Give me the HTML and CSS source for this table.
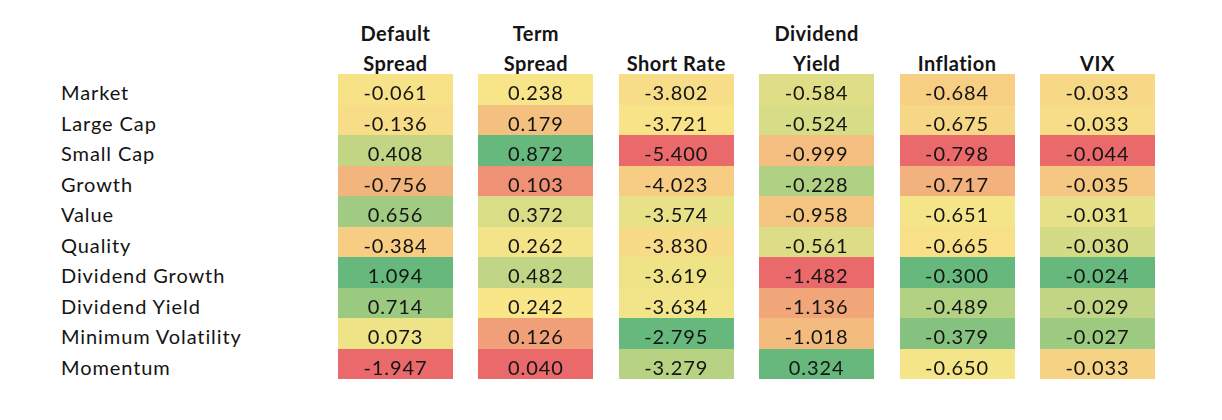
FILE: index.html
```html
<!DOCTYPE html>
<html lang="en">
<head>
<meta charset="utf-8">
<title>Factor sensitivities</title>
<link rel="stylesheet" href="styles.css">
</head>
<body>
<div class="heatmap">
  <div class="head blank"></div>
  <div class="head">Default<br>Spread</div>
  <div class="head">Term<br>Spread</div>
  <div class="head">Short Rate</div>
  <div class="head">Dividend<br>Yield</div>
  <div class="head">Inflation</div>
  <div class="head">VIX</div>

  <div class="label">Market</div>
  <div class="cell" style="background:rgb(255,231,131)">-0.061</div>
  <div class="cell" style="background:rgb(255,234,132)">0.238</div>
  <div class="cell" style="background:rgb(254,226,130)">-3.802</div>
  <div class="cell" style="background:rgb(228,227,130)">-0.584</div>
  <div class="cell" style="background:rgb(254,211,127)">-0.684</div>
  <div class="cell" style="background:rgb(254,220,129)">-0.033</div>

  <div class="label">Large Cap</div>
  <div class="cell" style="background:rgb(254,226,130)">-0.136</div>
  <div class="cell" style="background:rgb(253,195,124)">0.179</div>
  <div class="cell" style="background:rgb(255,232,131)">-3.721</div>
  <div class="cell" style="background:rgb(220,225,130)">-0.524</div>
  <div class="cell" style="background:rgb(254,219,129)">-0.675</div>
  <div class="cell" style="background:rgb(254,226,130)">-0.033</div>

  <div class="label">Small Cap</div>
  <div class="cell" style="background:rgb(197,218,129)">0.408</div>
  <div class="cell" style="background:rgb(99,190,123)">0.872</div>
  <div class="cell" style="background:rgb(248,105,107)">-5.400</div>
  <div class="cell" style="background:rgb(253,193,124)">-0.999</div>
  <div class="cell" style="background:rgb(248,105,107)">-0.798</div>
  <div class="cell" style="background:rgb(248,105,107)">-0.044</div>

  <div class="label">Growth</div>
  <div class="cell" style="background:rgb(252,184,122)">-0.756</div>
  <div class="cell" style="background:rgb(250,146,115)">0.103</div>
  <div class="cell" style="background:rgb(254,209,127)">-4.023</div>
  <div class="cell" style="background:rgb(178,213,128)">-0.228</div>
  <div class="cell" style="background:rgb(252,180,122)">-0.717</div>
  <div class="cell" style="background:rgb(253,203,126)">-0.035</div>

  <div class="label">Value</div>
  <div class="cell" style="background:rgb(162,208,127)">0.656</div>
  <div class="cell" style="background:rgb(222,226,130)">0.372</div>
  <div class="cell" style="background:rgb(237,230,131)">-3.574</div>
  <div class="cell" style="background:rgb(253,201,125)">-0.958</div>
  <div class="cell" style="background:rgb(252,234,132)">-0.651</div>
  <div class="cell" style="background:rgb(236,229,131)">-0.031</div>

  <div class="label">Quality</div>
  <div class="cell" style="background:rgb(254,209,127)">-0.384</div>
  <div class="cell" style="background:rgb(250,233,132)">0.262</div>
  <div class="cell" style="background:rgb(254,224,130)">-3.830</div>
  <div class="cell" style="background:rgb(225,226,130)">-0.561</div>
  <div class="cell" style="background:rgb(255,229,131)">-0.665</div>
  <div class="cell" style="background:rgb(216,224,130)">-0.030</div>

  <div class="label">Dividend Growth</div>
  <div class="cell" style="background:rgb(99,190,123)">1.094</div>
  <div class="cell" style="background:rgb(195,218,129)">0.482</div>
  <div class="cell" style="background:rgb(245,232,131)">-3.619</div>
  <div class="cell" style="background:rgb(248,105,107)">-1.482</div>
  <div class="cell" style="background:rgb(99,190,123)">-0.300</div>
  <div class="cell" style="background:rgb(99,190,123)">-0.024</div>

  <div class="label">Dividend Yield</div>
  <div class="cell" style="background:rgb(154,206,126)">0.714</div>
  <div class="cell" style="background:rgb(255,235,132)">0.242</div>
  <div class="cell" style="background:rgb(247,233,132)">-3.634</div>
  <div class="cell" style="background:rgb(251,168,119)">-1.136</div>
  <div class="cell" style="background:rgb(181,214,128)">-0.489</div>
  <div class="cell" style="background:rgb(197,218,129)">-0.029</div>

  <div class="label">Minimum Volatility</div>
  <div class="cell" style="background:rgb(245,232,131)">0.073</div>
  <div class="cell" style="background:rgb(251,161,118)">0.126</div>
  <div class="cell" style="background:rgb(99,190,123)">-2.795</div>
  <div class="cell" style="background:rgb(253,190,123)">-1.018</div>
  <div class="cell" style="background:rgb(133,200,125)">-0.379</div>
  <div class="cell" style="background:rgb(158,207,126)">-0.027</div>

  <div class="label">Momentum</div>
  <div class="cell" style="background:rgb(248,105,107)">-1.947</div>
  <div class="cell" style="background:rgb(248,105,107)">0.040</div>
  <div class="cell" style="background:rgb(185,215,128)">-3.279</div>
  <div class="cell" style="background:rgb(99,190,123)">0.324</div>
  <div class="cell" style="background:rgb(252,234,132)">-0.650</div>
  <div class="cell" style="background:rgb(253,214,128)">-0.033</div>
</div>
</body>
</html>
```
FILE: styles.css
```css
html, body {
  margin: 0;
  padding: 0;
  background: #ffffff;
}

body {
  font-family: Lato, "Liberation Sans", sans-serif;
  font-size: 20px;
  letter-spacing: 0.9px;
  color: #141414;
}

.heatmap {
  display: grid;
  grid-template-columns: 251.6px repeat(6, 115px);
  grid-template-rows: 56px repeat(10, 30.5px);
  column-gap: 25.4px;
  padding: 18px 0 0 61px;
}

.head {
  font-weight: 700;
  letter-spacing: 0.5px;
  text-align: center;
  line-height: 30px;
  display: flex;
  flex-direction: column;
  justify-content: flex-end;
  margin-bottom: -4px;
}

.label {
  display: flex;
  align-items: flex-end;
  line-height: 20px;
  padding-bottom: 2.5px;
  white-space: nowrap;
}

.cell {
  display: flex;
  align-items: flex-end;
  justify-content: center;
  line-height: 20px;
  padding-bottom: 2.5px;
  filter: saturate(0.92) brightness(0.98);
}
```
